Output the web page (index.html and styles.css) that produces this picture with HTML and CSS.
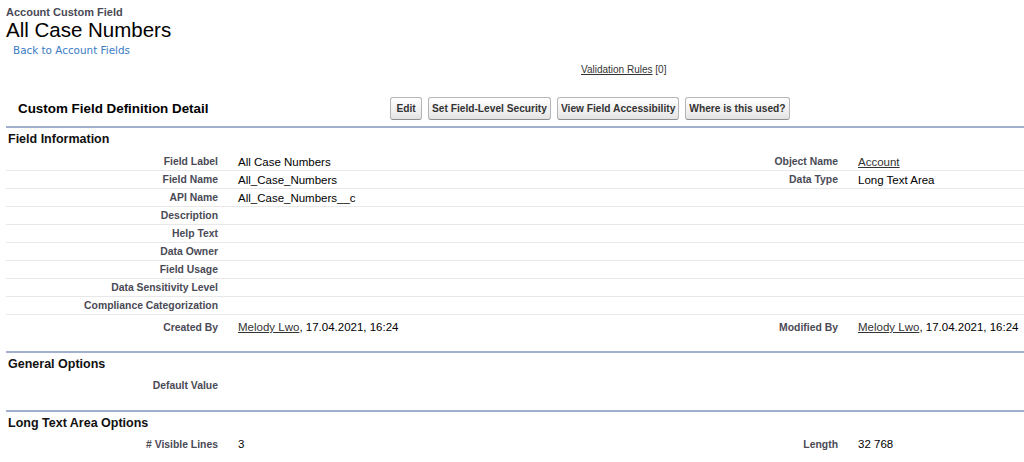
FILE: index.html
```html
<!DOCTYPE html>
<html>
<head>
<meta charset="utf-8">
<link rel="stylesheet" href="styles.css">
</head>
<body>
<div class="page-title">
  <div class="type">Account Custom Field</div>
  <h1>All Case Numbers</h1>
  <a class="breadcrumb" href="#">Back to Account Fields</a>
</div>
<div class="related-links">
  <a href="#">Validation Rules</a> <span>[0]</span>
</div>
<div class="block">
  <div class="block-head">
    <h2>Custom Field Definition Detail</h2>
    <div class="buttons">
      <button class="btn btn-edit">Edit</button>
      <button class="btn">Set Field-Level Security</button>
      <button class="btn">View Field Accessibility</button>
      <button class="btn">Where is this used?</button>
    </div>
  </div>

  <div class="section">
    <h3>Field Information</h3>
    <div class="rows">
      <div class="row"><div class="lbl">Field Label</div><div class="val">All Case Numbers</div><div class="lbl">Object Name</div><div class="val"><a href="#">Account</a></div></div>
      <div class="row"><div class="lbl">Field Name</div><div class="val">All_Case_Numbers</div><div class="lbl">Data Type</div><div class="val">Long Text Area</div></div>
      <div class="row"><div class="lbl">API Name</div><div class="val">All_Case_Numbers__c</div><div class="lbl"></div><div class="val"></div></div>
      <div class="row"><div class="lbl">Description</div><div class="val"></div><div class="lbl"></div><div class="val"></div></div>
      <div class="row"><div class="lbl">Help Text</div><div class="val"></div><div class="lbl"></div><div class="val"></div></div>
      <div class="row"><div class="lbl">Data Owner</div><div class="val"></div><div class="lbl"></div><div class="val"></div></div>
      <div class="row"><div class="lbl">Field Usage</div><div class="val"></div><div class="lbl"></div><div class="val"></div></div>
      <div class="row"><div class="lbl">Data Sensitivity Level</div><div class="val"></div><div class="lbl"></div><div class="val"></div></div>
      <div class="row"><div class="lbl">Compliance Categorization</div><div class="val"></div><div class="lbl"></div><div class="val"></div></div>
      <div class="row tall"><div class="lbl">Created By</div><div class="val"><a href="#">Melody Lwo</a>, 17.04.2021, 16:24</div><div class="lbl">Modified By</div><div class="val"><a href="#">Melody Lwo</a>, 17.04.2021, 16:24</div></div>
    </div>
  </div>

  <div class="section compact">
    <h3>General Options</h3>
    <div class="rows">
      <div class="row"><div class="lbl">Default Value</div><div class="val"></div><div class="lbl"></div><div class="val"></div></div>
    </div>
  </div>

  <div class="section compact">
    <h3>Long Text Area Options</h3>
    <div class="rows">
      <div class="row"><div class="lbl"># Visible Lines</div><div class="val">3</div><div class="lbl">Length</div><div class="val">32 768</div></div>
    </div>
  </div>
</div>
</body>
</html>
```

FILE: styles.css
```css
* { box-sizing: border-box; }
html, body { margin: 0; padding: 0; background: #fff; }
body {
  font-family: "Liberation Sans", Arial, sans-serif;
  color: #000;
  width: 1024px;
  height: 462px;
  overflow: hidden;
}
.page-title { padding: 6px 0 0 6px; }
.type {
  font-size: 11px;
  font-weight: bold;
  color: #4a4a56;
  line-height: 12px;
}
.page-title h1 {
  margin: 0;
  font-size: 20.5px;
  font-weight: normal;
  line-height: 24px;
  color: #000;
}
.breadcrumb {
  display: block;
  margin: 2px 0 0 7px;
  font-family: "DejaVu Sans", Verdana, sans-serif;
  font-size: 10.4px;
  line-height: 13px;
  color: #3a7bc4;
  text-decoration: none;
}
.related-links {
  margin: 7px 0 0 581px;
  font-size: 10px;
  line-height: 12px;
  color: #333;
}
.related-links a { color: #333; text-decoration: underline; }
.block { margin: 0 0 0 6px; }
.block-head {
  display: flex;
  align-items: center;
  height: 50px;
  padding-top: 14px;
}
.block-head h2 {
  margin: 0;
  width: 384px;
  padding-left: 12px;
  font-size: 13.4px;
  font-weight: bold;
  color: #000;
}
.buttons { display: flex; gap: 6px; }
.btn {
  font-family: "Liberation Sans", Arial, sans-serif;
  font-size: 10.2px;
  font-weight: bold;
  color: #333;
  line-height: 13px;
  padding: 4px 3px;
  border: 1px solid #b5b5b5;
  border-bottom-color: #8f8f8f;
  border-radius: 3px;
  background: linear-gradient(#ffffff, #f0f0f0 60%, #e4e4e4);
}
.btn-edit { min-width: 32px; }
.section {
  border-top: 2px solid #a2b0cd;
  padding-bottom: 15px;
}
.section h3 {
  margin: 0 0 3px 0;
  padding-left: 2px;
  height: 22px;
  line-height: 22px;
  font-size: 12.5px;
  font-weight: bold;
  color: #111;
}
.section.compact { padding-bottom: 16px; }
.section.compact h3 { margin-bottom: 1px; }
.row {
  display: grid;
  grid-template-columns: 222px 400px 220px 1fr;
  height: 18px;
  align-items: center;
  border-bottom: 1px solid #e8e8e8;
}
.rows .row:last-child { border-bottom: none; }
.row.tall { height: 21px; padding-top: 3px; }
.lbl {
  text-align: right;
  padding-right: 10px;
  font-size: 10.4px;
  font-weight: bold;
  color: #4a4a56;
  white-space: nowrap;
}
.val {
  padding-left: 10px;
  font-size: 11.5px;
  color: #000;
  white-space: nowrap;
}
.val a { color: #333; text-decoration: underline; }
```
